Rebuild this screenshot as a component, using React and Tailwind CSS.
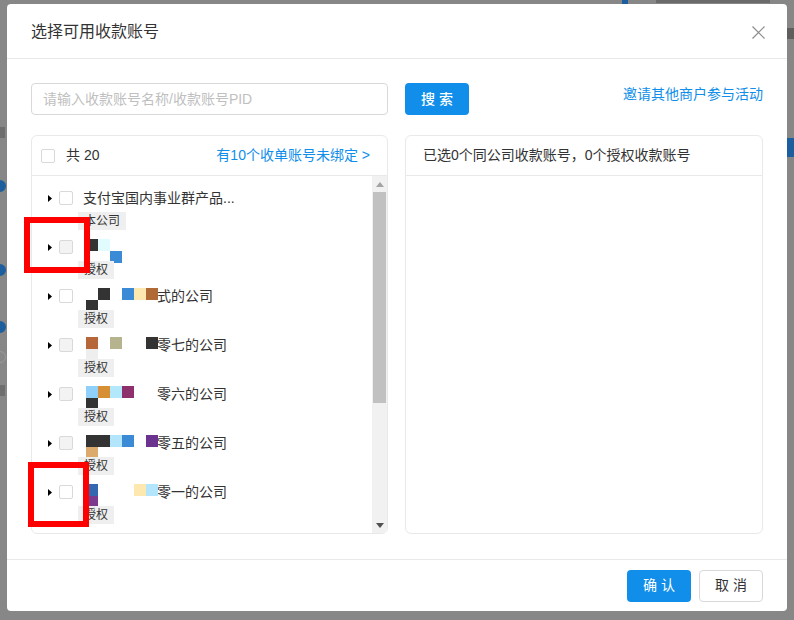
import React from 'react';

const rows = [
    { name: '支付宝国内事业群产品...', tag: '本公司', disabled: false, blocks: null },
    { name: '', tag: '授权', disabled: true, blocks: [[3, 3, '#333333'], [15, 3, '#e0fcff'], [27, 15, '#3a8ad6']] },
    { name: '式的公司', tag: '授权', disabled: false, blocks: [[15, 3, '#333333'], [3, 15, '#333333'], [39, 3, '#3a8ad6'], [51, 3, '#fde9b0'], [63, 3, '#b06a35']] },
    { name: '零七的公司', tag: '授权', disabled: true, blocks: [[3, 3, '#b5673a'], [27, 3, '#b5b48f'], [63, 3, '#333333'], [3, 15, '#eeeeee']] },
    { name: '零六的公司', tag: '授权', disabled: true, blocks: [[3, 3, '#8fd0fa'], [15, 3, '#d68f35'], [27, 3, '#b3e8fb'], [39, 3, '#8e306b'], [3, 15, '#333333']] },
    { name: '零五的公司', tag: '授权', disabled: true, blocks: [[3, 3, '#333333'], [15, 3, '#333333'], [27, 3, '#b3e5fc'], [39, 3, '#3a8ad6'], [63, 3, '#6b3290'], [3, 15, '#dcaa6c']] },
    { name: '零一的公司', tag: '授权', disabled: false, blocks: [[3, 3, '#3566b0'], [3, 15, '#7c3a8e'], [51, 3, '#fde9b0'], [63, 3, '#b3e5fc']] },
];

function Checkbox({ disabled }) {
    return (
        <span className={'block w-[14px] h-[14px] shrink-0 rounded-[2px] border border-[#d9d9d9] ' + (disabled ? 'bg-[#f3f3f3]' : 'bg-white')}></span>
    );
}

function Caret() {
    return (
        <svg width="4" height="7" viewBox="0 0 4 7" className="shrink-0">
            <path d="M0 0 L4 3.5 L0 7 Z" fill="#000" />
        </svg>
    );
}

function Row({ row }) {
    return (
        <div className="flex flex-col pl-[16px] pb-[6px]">
            <div className="flex items-center h-[22px]">
                <Caret />
                <span className="ml-[7px]"><Checkbox disabled={row.disabled} /></span>
                <span className="ml-[10px] flex items-center h-[22px] text-[14px] leading-[22px] text-[#333] whitespace-nowrap">
                    {row.blocks && (
                        <span className="relative block w-[74px] h-[22px]">
                            {row.blocks.map((b, i) => (
                                <span
                                    key={i}
                                    className="absolute block w-[12px] h-[12px]"
                                    style={{ left: b[0], top: b[1], background: b[2] }}
                                ></span>
                            ))}
                        </span>
                    )}
                    {row.name}
                </span>
            </div>
            <div className="flex ml-[30px] mt-[3px] h-[18px]">
                <span className="relative block h-[18px] px-[6px] bg-[#efefef] text-[12px] leading-[18px] text-[#333]">{row.tag}</span>
            </div>
        </div>
    );
}

function Scrollbar() {
    return (
        <div className="w-[15px] shrink-0 bg-[#f1f1f1] flex flex-col">
            <div className="h-[16px] flex items-center justify-center">
                <svg width="8" height="5" viewBox="0 0 8 5"><path d="M0 5 L4 0 L8 5 Z" fill="#a3a3a3" /></svg>
            </div>
            <div className="mx-[1px] h-[211px] bg-[#c1c1c1]"></div>
            <div className="flex-1"></div>
            <div className="h-[16px] flex items-center justify-center">
                <svg width="8" height="5" viewBox="0 0 8 5"><path d="M0 0 L4 5 L8 0 Z" fill="#505050" /></svg>
            </div>
        </div>
    );
}

export default function App() {
    return (
        <div className="relative w-[794px] h-[620px] overflow-hidden bg-[#878787] pt-[4px] pl-[7px] font-['Liberation_Sans','Noto_Sans_CJK_SC',sans-serif]">
            {/* page behind the mask */}
            <span className="absolute left-[622px] top-0 w-[6px] h-[4px] bg-[#1d5f9e]"></span>
            <span className="absolute left-[656px] top-0 w-[114px] h-[3px] bg-[#6a6a6a]"></span>
            <span className="absolute left-0 top-[127px] w-[5px] h-[11px] bg-[#6e6e6e]"></span>
            <span className="absolute left-[-6px] top-[180px] w-[12px] h-[12px] rounded-full border-[2px] border-[#1d5f9e] bg-[#1d5f9e]"></span>
            <span className="absolute left-[-6px] top-[264px] w-[12px] h-[12px] rounded-full border-[2px] border-[#1d5f9e] bg-[#1d5f9e]"></span>
            <span className="absolute left-[-6px] top-[321px] w-[12px] h-[12px] rounded-full border-[2px] border-[#1d5f9e] bg-[#1d5f9e]"></span>
            <span className="absolute left-[-6px] top-[351px] w-[12px] h-[12px] rounded-full border border-[#9a9a9a]"></span>
            <span className="absolute left-0 top-[385px] w-[5px] h-[11px] bg-[#6e6e6e]"></span>
            <span className="absolute left-[787px] top-[138px] w-[7px] h-[19px] bg-[#1d5f9e]"></span>
            <span className="absolute left-[787px] top-[28px] w-[7px] h-[11px] bg-[#5e5e5e]"></span>

            <div className="relative w-[780px] h-[607px] bg-white rounded-[4px] flex flex-col">
                <div className="h-[55px] shrink-0 border-b border-[#e9e9e9] flex items-center justify-between pl-[24px] pr-[22px] pt-[2px]">
                    <span className="text-[16px] text-[#333]">选择可用收款账号</span>
                    <svg width="13" height="13" viewBox="0 0 13 13">
                        <path d="M0.5 0.5 L12.5 12.5 M12.5 0.5 L0.5 12.5" stroke="#8c8c8c" strokeWidth="1.2" />
                    </svg>
                </div>

                <div className="px-[24px] pt-[24px] flex flex-col">
                    <div className="flex h-[32px]">
                        <div className="w-[357px] h-[32px] border border-[#d9d9d9] rounded-[4px] px-[11px] flex items-center text-[14px] text-[#bfbfbf]">
                            请输入收款账号名称/收款账号PID
                        </div>
                        <button className="ml-[17px] w-[64px] h-[32px] rounded-[4px] bg-[#108ee9] text-white text-[14px] font-medium">搜 索</button>
                        <a className="ml-auto self-start text-[14px] leading-[22px] text-[#108ee9]">邀请其他商户参与活动</a>
                    </div>

                    <div className="mt-[20px] flex gap-[17px] h-[399px]">
                        <div className="w-[357px] border border-[#e9e9e9] rounded-[6px] flex flex-col overflow-hidden">
                            <div className="h-[40px] shrink-0 border-b border-[#e9e9e9] flex items-center pl-[9px] pr-[17px]">
                                <Checkbox />
                                <span className="ml-[11px] text-[14px] text-[#333]">共 20</span>
                                <span className="ml-auto text-[14px] text-[#108ee9]">有10个收单账号未绑定 &gt;</span>
                            </div>
                            <div className="flex flex-1 min-h-0">
                                <div className="flex-1 pt-[11px] overflow-hidden">
                                    {rows.map((r, i) => <Row key={i} row={r} />)}
                                </div>
                                <Scrollbar />
                            </div>
                        </div>
                        <div className="w-[358px] border border-[#e9e9e9] rounded-[6px] flex flex-col">
                            <div className="h-[40px] shrink-0 border-b border-[#e9e9e9] flex items-center pl-[17px] text-[14px] text-[#333]">
                                已选0个同公司收款账号，0个授权收款账号
                            </div>
                        </div>
                    </div>
                </div>

                <div className="mt-auto h-[52px] border-t border-[#e9e9e9] flex items-center justify-end gap-[8px] pr-[24px]">
                    <button className="w-[64px] h-[32px] rounded-[4px] bg-[#108ee9] text-white text-[14px]">确 认</button>
                    <button className="w-[64px] h-[32px] rounded-[4px] border border-[#d9d9d9] bg-white text-[#333] text-[14px]">取 消</button>
                </div>
            </div>

            {/* annotation boxes */}
            <div className="absolute left-[24px] top-[217px] w-[66px] h-[56px] border-[6px] border-[#ff0000]"></div>
            <div className="absolute left-[28px] top-[462px] w-[61px] h-[65px] border-[6px] border-[#ff0000]"></div>
        </div>
    );
}
